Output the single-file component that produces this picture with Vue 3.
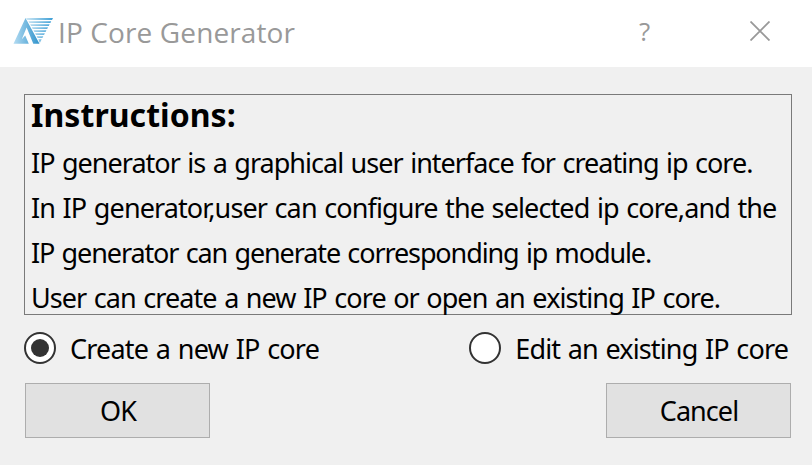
<script setup>
import { ref } from 'vue'

const mode = ref('create')
const lines = [
  { text: 'IP generator is a graphical user interface for creating ip core.', cls: 'l1' },
  { text: 'In IP generator,user can configure the selected ip core,and the', cls: 'l2' },
  { text: 'IP generator can generate corresponding ip module.', cls: 'l3' },
  { text: 'User can create a new IP core or open an existing IP core.', cls: 'l4' },
]
</script>

<template>
  <div class="dialog">
    <header class="titlebar">
      <svg class="logo" width="41" height="28" viewBox="0 0 41 28">
        <defs>
          <linearGradient id="lg" x1="0" y1="0" x2="1" y2="0">
            <stop offset="0" stop-color="#b5dcf2" />
            <stop offset="1" stop-color="#2f93cc" />
          </linearGradient>
          <linearGradient id="sg" gradientUnits="userSpaceOnUse" x1="13" y1="0" x2="40" y2="0">
            <stop offset="0" stop-color="#cfe8f5" />
            <stop offset="1" stop-color="#3d9fd6" />
          </linearGradient>
        </defs>
        <path fill="url(#lg)" d="M12.5 1 L26.5 26.7 H20.3 L13.6 10.5 L8.8 22.3 L12.2 18.6 L15.8 26.7 H0.5 Z" />
        <g fill="url(#sg)">
          <path d="M13 1 H40 L39 3 H14.2 Z" />
          <path d="M15.5 4.3 H38.2 L37.4 5.9 H16.4 Z" />
          <path d="M17.2 7.3 H36.6 L35.8 8.9 H18.1 Z" />
          <path d="M18.8 10.3 H35 L34.2 11.9 H19.7 Z" />
          <path d="M20.5 13.3 H33.4 L32.6 14.9 H21.4 Z" />
          <path d="M22.1 16.3 H31.9 L31 17.9 H23 Z" />
          <path d="M23.7 19.3 H30.3 L29.4 20.9 H24.6 Z" />
          <path d="M25.3 22.3 H28.7 L26.8 26 Z" />
        </g>
      </svg>
      <h1 class="title">IP Core Generator</h1>
      <span class="help">?</span>
      <svg class="close" width="20" height="20" viewBox="0 0 20 20">
        <path d="M0.5 0.5 L19.5 19.5 M19.5 0.5 L0.5 19.5" stroke="#999" stroke-width="1.8" fill="none" />
      </svg>
    </header>

    <section class="frame">
      <h2 class="heading">Instructions:</h2>
      <p v-for="l in lines" :key="l.cls" class="line" :class="l.cls">{{ l.text }}</p>
    </section>

    <div class="options">
      <label class="option create" @click="mode = 'create'">
        <span class="radio" :class="{ on: mode === 'create' }"></span>
        <span class="label">Create a new IP core</span>
      </label>
      <label class="option edit" @click="mode = 'edit'">
        <span class="radio" :class="{ on: mode === 'edit' }"></span>
        <span class="label">Edit an existing IP core</span>
      </label>
    </div>

    <footer class="actions">
      <button class="btn">OK</button>
      <button class="btn">Cancel</button>
    </footer>
  </div>
</template>

<style>
body { margin: 0; background: #f0f0f0; }
</style>

<style scoped>
.dialog {
  width: 812px;
  height: 465px;
  overflow: hidden;
  background: #f0f0f0;
  color: #000;
  font: 27px "Noto Sans", sans-serif;
}
.titlebar {
  display: flex;
  height: 67px;
  box-sizing: border-box;
  padding-left: 13px;
  background: #fff;
  color: #999;
}
.logo { margin-top: 17px; }
.title {
  width: 580px;
  margin: 0;
  padding-left: 4px;
  font: 400 28px/64px "Open Sans", sans-serif;
  letter-spacing: 0.12px;
  white-space: nowrap;
}
.help { width: 111px; padding-left: 1px; font: 400 26px/62px "Open Sans", sans-serif; }
.close { margin-top: 21px; }
.frame {
  width: 768px;
  height: 221px;
  box-sizing: border-box;
  margin: 27px 0 0 24px;
  padding-left: 6px;
  border: 1px solid #7a7a7a;
}
.heading {
  margin: 0;
  padding-bottom: 5px;
  font-size: 32px;
  line-height: 40px;
  font-weight: 700;
  letter-spacing: 0.05px;
}
.line {
  margin: 0;
  line-height: 45px;
  white-space: nowrap;
  word-spacing: 1.4px;
}
.l1 { letter-spacing: -0.98px; }
.l2 { letter-spacing: -0.89px; }
.l3 { letter-spacing: -1.11px; }
.l4 { letter-spacing: -0.93px; }
.options {
  display: flex;
  justify-content: space-between;
  height: 66px;
  padding: 0 24px 2px;
}
.option { display: flex; align-items: center; gap: 14px; word-spacing: 1.4px; white-space: nowrap; }
.create { letter-spacing: -0.8px; }
.edit { letter-spacing: -0.86px; }
.label { line-height: 45px; }
.radio {
  width: 32px;
  height: 32px;
  box-sizing: border-box;
  border: 2px solid #333;
  border-radius: 50%;
  background: #fff;
  display: grid;
  place-items: center;
}
.radio.on::after {
  content: "";
  width: 18px;
  height: 18px;
  border-radius: 50%;
  background: #333;
}
.actions {
  display: flex;
  justify-content: space-between;
  padding: 0 21px 0 25px;
}
.btn {
  width: 185px;
  height: 55px;
  padding: 0 0 0 1px;
  border: 1px solid #adadad;
  background: #e1e1e1;
  color: #000;
  font: 27px "Noto Sans", sans-serif;
  letter-spacing: -0.95px;
}
</style>
